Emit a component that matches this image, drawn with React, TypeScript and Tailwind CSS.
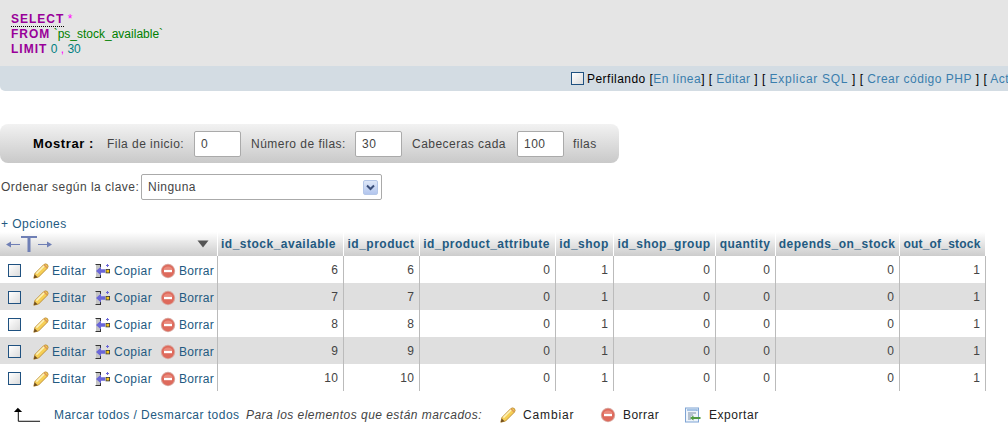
const rows = [
  [6, 6],
  [7, 7],
  [8, 8],
  [9, 9],
  [10, 10],
];

const columns = [
  { name: "id_stock_available", width: "w-[126px] pr-[3px]", tracking: "tracking-[0.5px]" },
  { name: "id_product", width: "w-[76px]", tracking: "tracking-[0.5px]" },
  { name: "id_product_attribute", width: "w-[136px] pr-[1px]", tracking: "tracking-[0.5px]" },
  { name: "id_shop", width: "w-[58px]", tracking: "tracking-[0.5px]" },
  { name: "id_shop_group", width: "w-[102px]", tracking: "tracking-[0.5px]" },
  { name: "quantity", width: "w-[60px]", tracking: "tracking-[0.5px]" },
  { name: "depends_on_stock", width: "w-[124px]", tracking: "tracking-[0.5px]" },
  { name: "out_of_stock", width: "w-[86px]", tracking: "tracking-[0.2px]" },
];

function Pencil() {
  return (
    <svg viewBox="0 0 16 16" className="h-4 w-4 shrink-0">
      <path d="M0.8 15.2 L2 10.4 L10.8 1.6 Q12.6 0.2 14.4 1.6 Q15.8 3.4 14.4 5.2 L5.6 14 Z" fill="#f6cf55" stroke="#b98a33" strokeWidth="0.9" />
      <path d="M3.4 10.6 L11.4 2.6" stroke="#fdf2b8" strokeWidth="1.5" />
      <path d="M11 1.8 L14.2 5" stroke="#dd9a58" strokeWidth="1.6" />
      <path d="M0.8 15.2 L1.7 11.6 L4.5 14.2 Z" fill="#6b4a1f" />
    </svg>
  );
}

function Copy() {
  return (
    <svg viewBox="0 0 16 16" className="h-4 w-4 shrink-0">
      <path d="M0.5 1.5 H5.5 M5.5 1 V4 M5.5 11.5 V15 M0.5 14.5 H5.5" stroke="#333333" strokeWidth="1" fill="none" />
      <rect x="1" y="2" width="4" height="12" fill="#c4c4c4" />
      <path d="M1 8 L6 3.5 V6.2 H10 V9.8 H6 V12.5 Z" fill="#6a66d8" />
      <rect x="11" y="6.5" width="3.6" height="3.4" fill="#f5c518" stroke="#333333" strokeWidth="0.8" />
      <path d="M12.5 1 V4 M11 2.5 H14" stroke="#6a66d8" strokeWidth="1" />
    </svg>
  );
}

function Remove() {
  return (
    <svg viewBox="0 0 16 16" className="h-4 w-4 shrink-0">
      <circle cx="8" cy="8" r="7.2" fill="#d9a79f" />
      <circle cx="8" cy="8" r="6.2" fill="#de6a5c" />
      <path d="M3.2 6.5 A5.4 5.4 0 0 1 12.8 6.5 Z" fill="#ea8a7c" />
      <rect x="4" y="6.8" width="8" height="2.4" fill="#ffffff" />
    </svg>
  );
}

function Export() {
  return (
    <svg viewBox="0 0 16 16" className="h-4 w-4 shrink-0">
      <rect x="0.5" y="1" width="13" height="14" fill="#eef4fb" stroke="#7fa4d4" strokeWidth="1" />
      <path d="M2 3 H12 V4" stroke="#8fb4e0" strokeWidth="1.4" fill="none" />
      <path d="M3 6 H11 M3 8 H8 M3 10 H6 M3 12 H6" stroke="#7d8fa5" strokeWidth="1" />
      <path d="M5 11 L8.5 8.5 V10 H15.5 V12 H8.5 V13.5 Z" fill="#4f9a42" />
    </svg>
  );
}

function Checkbox() {
  return <span className="block h-[13px] w-[13px] shrink-0 border border-[#1f5180] bg-gradient-to-br from-white to-[#dcdcdc]" />;
}

function Action({ icon, label, gap }: { icon: React.ReactNode; label: string; gap: string }) {
  return (
    <span className={"flex items-center text-[#235a81] " + gap}>
      {icon}
      {label}
    </span>
  );
}

export default function App() {
  return (
    <div className="h-[432px] w-[1008px] overflow-hidden bg-white font-['Liberation_Sans',Arial,sans-serif] text-[12px] tracking-[0.47px] text-[#444444]">
      <div className="h-[66px] bg-[#e5e5e5] pl-[11px] pt-[12px] leading-[15px] tracking-normal">
        <div>
          <span className="border-b border-dotted border-black font-bold tracking-[1px] text-[#990099]">SELECT</span>{" "}
          <span className="text-[#ff00ff]">*</span>
        </div>
        <div>
          <span className="font-bold tracking-[1px] text-[#990099]">FROM</span>{" "}
          <span className="text-[#008000]">`ps_stock_available`</span>
        </div>
        <div>
          <span className="font-bold tracking-[1px] text-[#990099]">LIMIT</span>{" "}
          <span className="text-[#008080]">0</span> <span className="text-[#ff00ff]">,</span>{" "}
          <span className="text-[#008080]">30</span>
        </div>
      </div>

      <div className="flex h-[25px] items-center overflow-hidden whitespace-nowrap rounded-bl-[5px] bg-[#d3dce3] pl-[571px] text-black">
        <Checkbox />
        <span className="ml-[3px]">
          Perfilando [<span className="text-[#3a7ead]">En línea</span>] [ <span className="text-[#3a7ead]">Editar</span> ] [{" "}
          <span className="tracking-[0.72px] text-[#3a7ead]">Explicar SQL</span> ] [{" "}
          <span className="tracking-[0.5px] text-[#3a7ead]">Crear código PHP</span> ] [{" "}
          <span className="text-[#3a7ead]">Actualizar</span> ]
        </span>
      </div>

      <div className="mt-[33px] flex h-[39px] w-[619px] items-center rounded-[8px] bg-gradient-to-b from-[#f2f2f2] to-[#c9c9c9] pl-[33px]">
        <span className="w-[74px] text-[13px] font-bold tracking-[0.6px] text-black">Mostrar :</span>
        <span className="w-[87px]">Fila de inicio:</span>
        <span className="flex h-[26px] w-[47px] items-center rounded-[2px] border border-[#aaaaaa] bg-white pl-[6px]">0</span>
        <span className="ml-[10px] w-[104px]">Número de filas:</span>
        <span className="flex h-[26px] w-[47px] items-center rounded-[2px] border border-[#aaaaaa] bg-white pl-[6px]">30</span>
        <span className="ml-[10px] w-[105px]">Cabeceras cada</span>
        <span className="flex h-[26px] w-[47px] items-center rounded-[2px] border border-[#aaaaaa] bg-white pl-[6px]">100</span>
        <span className="ml-[9px]">filas</span>
      </div>

      <div className="mt-[11px] flex items-center pl-px">
        <span className="w-[140px]">Ordenar según la clave:</span>
        <span className="flex h-[26px] w-[241px] items-center justify-between rounded-[2px] border border-[#aaaaaa] bg-white pl-[6px] pr-[3px]">
          Ninguna
          <span className="flex h-[15px] w-[15px] items-center justify-center rounded-[2px] border border-[#b5c7e8] bg-gradient-to-b from-[#dfe8f8] to-[#b3c6ee]">
            <svg viewBox="0 0 9 7" className="h-[7px] w-[9px]">
              <path d="M1 1.5 L4.5 5 L8 1.5" stroke="#3b4f7a" strokeWidth="2" fill="none" />
            </svg>
          </span>
        </span>
      </div>

      <div className="mt-[17px] h-[15px] pl-px leading-[15px] text-[#235a81]">+ Opciones</div>

      <table className="w-[985px] table-fixed border-collapse">
        <thead>
          <tr className="h-[24px] bg-gradient-to-b from-white to-[#cccccc]">
            <th className="w-[217px] border-r border-white p-0">
              <div className="flex items-center justify-between pl-[6px] pr-[8px]">
                <svg viewBox="0 0 46 18" className="h-[18px] w-[46px]">
                  <path d="M0 9.5 L5 6.5 V9 H14 V10 H5 V12.5 Z M46 9.5 L41 6.5 V9 H32 V10 H41 V12.5 Z" fill="#6f7fb5" />
                  <path d="M15 1 H31 V3 H24.5 V17 H21.5 V3 H15 Z" fill="#6f7fb5" />
                </svg>
                <svg viewBox="0 0 12 8" className="h-[8px] w-[12px]">
                  <path d="M0.5 0.5 H11.5 L6 7.5 Z" fill="#555555" />
                </svg>
              </div>
            </th>
            {columns.map((c) => (
              <th key={c.name} className={c.width + " " + c.tracking + " border-r border-white p-0 text-center font-bold text-[#235a81]"}>
                {c.name}
              </th>
            ))}
          </tr>
        </thead>
        <tbody>
          {rows.map((r, i) => (
            <tr key={r[0]} className={(i % 2 ? "bg-[#dfdfdf]" : "bg-white") + " h-[27px]"}>
              <td className="p-0 pt-[2px]">
                <div className="flex items-center pl-[8px]">
                  <Checkbox />
                  <span className="ml-[12px] flex items-center">
                    <Action icon={<Pencil />} label="Editar" gap="gap-[3px] w-[62px]" />
                    <Action icon={<Copy />} label="Copiar" gap="gap-[3px] w-[65px]" />
                    <Action icon={<Remove />} label="Borrar" gap="gap-[3px] tracking-[0.3px]" />
                  </span>
                </div>
              </td>
              {[r[0], r[1], 0, 1, 0, 0, 0, 1].map((v, j) => (
                <td key={j} className="border-l border-[#bbbbbb] p-0 pr-[4px] pt-px text-right last:border-r">
                  {v}
                </td>
              ))}
            </tr>
          ))}
        </tbody>
      </table>

      <div className="mt-[15px] flex items-center pl-[13px]">
        <svg viewBox="0 0 29 16" className="h-[16px] w-[28px] shrink-0">
          <path d="M5 0.5 L9.5 5 H1 Z" fill="#000000" />
          <path d="M5.5 4 V14.5 H28" stroke="#000000" strokeWidth="1" fill="none" />
        </svg>
        <span className="ml-[13px] w-[192px] whitespace-nowrap text-[#235a81]">Marcar todos / Desmarcar todos</span>
        <span className="w-[254px] whitespace-nowrap italic">Para los elementos que están marcados:</span>
        <span className="flex w-[100px] items-center gap-[7px] tracking-[0.85px] text-[#222222]">
          <Pencil />
          Cambiar
        </span>
        <span className="flex w-[85px] items-center gap-[7px] text-[#222222]">
          <Remove />
          Borrar
        </span>
        <span className="flex items-center gap-[8px] tracking-[0.55px] text-[#222222]">
          <Export />
          Exportar
        </span>
      </div>
    </div>
  );
}
